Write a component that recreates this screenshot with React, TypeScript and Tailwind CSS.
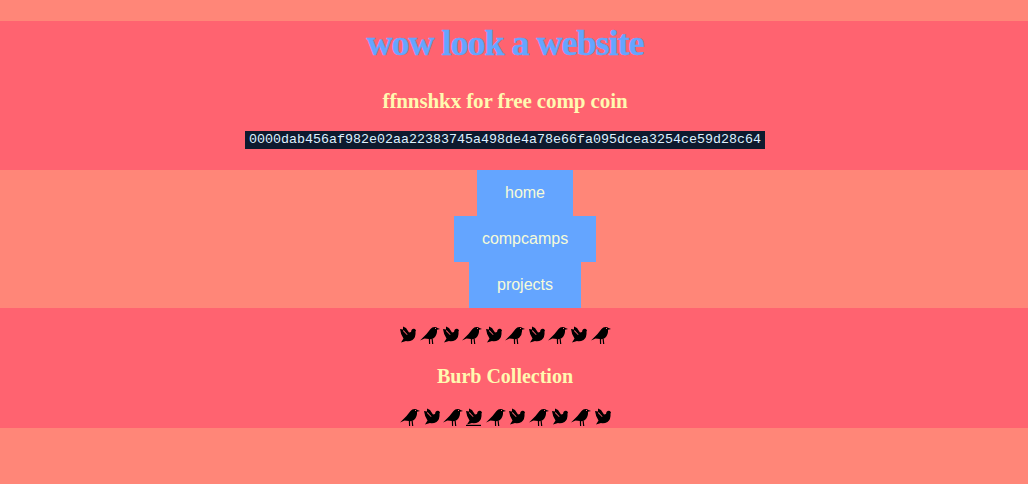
const HASH = "0000dab456af982e02aa22383745a498de4a78e66fa095dcea3254ce59d28c64";

const NAV_LINKS = ["home", "compcamps", "projects"];

type Burb = "dove" | "crow" | "perched";

const TOP_BURBS: Burb[] = ["dove", "crow", "dove", "crow", "dove", "crow", "dove", "crow", "dove", "crow"];
const BOTTOM_BURBS: Burb[] = ["crow", "dove", "crow", "perched", "crow", "dove", "crow", "dove", "crow", "dove"];

function BurbIcon({ kind }: { kind: Burb }) {
  if (kind === "crow") {
    return (
      <svg width="20" height="18" viewBox="0 0 20 18" fill="black" className="block">
        <path d="M0 14.5 L6.5 8 L10.5 3 Q12 1 14.5 1 Q16.5 1 17.5 2 L20 3 L17 3.8 Q17.5 8.5 14 12 Q12 13.5 9 13 L4.5 12.5 Z" />
        <path d="M8.8 12.5 L10 12.5 L10.2 18 L9 18 Z M11.5 12.5 L12.7 12.5 L13.3 18 L12.1 18 Z" />
        <rect x="15" y="2" width="1" height="1" fill="#ff6370" />
      </svg>
    );
  }
  return (
    <svg width="16" height="18" viewBox="0 0 16 18" fill="black" className="block overflow-visible">
      <path d="M0 3 L3 3.5 L3 0.5 L6 2 L9 6.5 L11 6 L11.5 4 Q13 2 15 3 L16 4.5 L15.5 5.5 Q16 11.5 12.5 14 Q9 16 6 15 L1 16.5 L3.5 12.5 Q0.5 8 0 3 Z" />
      <path d="M3.5 4 L7.5 8.5 L7 9 L3 5 Z" fill="#ff6370" />
      {kind === "perched" && <rect x="0" y="16.8" width="15" height="1.2" />}
    </svg>
  );
}

function BurbRow({ burbs }: { burbs: Burb[] }) {
  return (
    <div className="flex justify-center gap-[3.4px] pr-[17px]">
      {burbs.map((kind, i) => (
        <BurbIcon key={i} kind={kind} />
      ))}
    </div>
  );
}

export default function App() {
  return (
    <div className="min-h-screen bg-[#ff8678] pt-[21px] text-center font-['Liberation_Serif',serif]">
      <header className="h-[149px] bg-[#ff6370] flex flex-col items-center pr-[18px]">
        <h1 className="h-[45px] text-[36px] leading-[45px] font-bold tracking-[-1px] text-[#64a5ff] [-webkit-text-stroke:0.5px_#64a5ff]">
          wow look a website
        </h1>
        <h2 className="mt-[22px] h-[26px] text-[21px] leading-[26px] font-bold tracking-[-0.1px] text-[#fff9b0]">
          ffnnshkx for free comp coin
        </h2>
        <code className="mt-[17px] h-[18px] px-[4px] bg-[#0e1a2e] text-[#dff1ff] text-[13.33px] leading-[18px] font-['Liberation_Mono',monospace]">
          {HASH}
        </code>
      </header>

      <nav className="flex flex-col items-center pl-[40px] pr-[18px] font-['Liberation_Sans',sans-serif]">
        {NAV_LINKS.map((link) => (
          <a key={link} className="h-[46px] px-[28px] bg-[#64a5ff] text-[#f6fbd8] text-base leading-[46px]">
            {link}
          </a>
        ))}
      </nav>

      <section className="h-[120px] bg-[#ff6370] flex flex-col">
        <div className="mt-[18px] h-[18px]">
          <BurbRow burbs={TOP_BURBS} />
        </div>
        <h3 className="mt-[20px] h-[24px] pr-[18px] text-[20px] leading-[24px] font-bold text-[#fff9b0]">
          Burb Collection
        </h3>
        <div className="mt-[20px] h-[18px]">
          <BurbRow burbs={BOTTOM_BURBS} />
        </div>
      </section>
    </div>
  );
}
